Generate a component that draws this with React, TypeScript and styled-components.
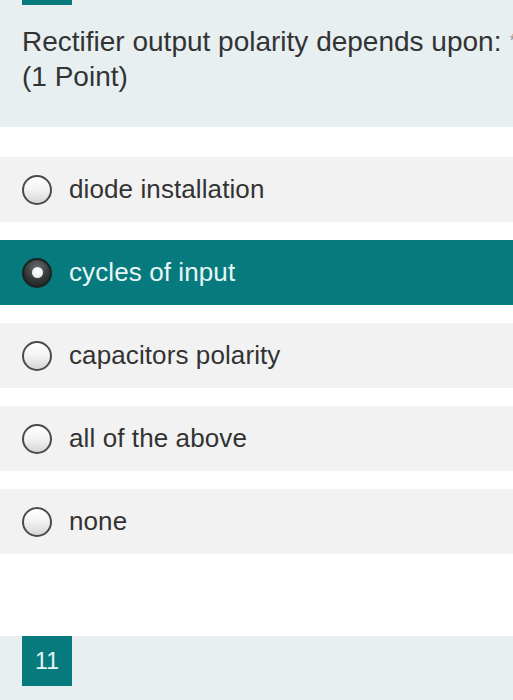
import styled, { createGlobalStyle } from "styled-components";

const GlobalStyle = createGlobalStyle`
  html, body {
    margin: 0;
    padding: 0;
    background: #ffffff;
    font-family: "Liberation Sans", Arial, sans-serif;
  }
`;

const Page = styled.div`
  width: 513px;
  height: 700px;
  display: flex;
  flex-direction: column;
  overflow: hidden;
`;

const Header = styled.div`
  background: #e7eff1;
  padding: 0 0 32px 22px;
  height: 127px;
  box-sizing: border-box;
  overflow: hidden;
`;

const TopMark = styled.div`
  width: 50px;
  height: 5px;
  background: #077a7d;
  margin-bottom: 19px;
`;

const Question = styled.div`
  font-size: 28px;
  line-height: 35px;
  color: #333333;
  white-space: nowrap;
`;

const Star = styled.span`
  color: #999999;
  font-size: 18px;
  vertical-align: top;
  margin-left: 8px;
`;

const Options = styled.div`
  display: flex;
  flex-direction: column;
  gap: 18px;
  margin-top: 30px;
`;

const Option = styled.div<{ $selected?: boolean }>`
  height: 65px;
  display: flex;
  align-items: center;
  gap: 17px;
  padding-left: 22px;
  background: ${(p) => (p.$selected ? "#077a7d" : "#f2f2f2")};
  color: ${(p) => (p.$selected ? "#e8f6f6" : "#333333")};
  font-size: 26px;
  letter-spacing: 0.1px;
`;

const Radio = styled.span<{ $checked?: boolean }>`
  width: 30px;
  height: 30px;
  box-sizing: border-box;
  border-radius: 50%;
  display: flex;
  align-items: center;
  justify-content: center;
  border: 2px solid ${(p) => (p.$checked ? "#1c2222" : "#4a4a4a")};
  background: ${(p) =>
    p.$checked
      ? "radial-gradient(circle at 50% 30%, #6a6e70 0%, #2e3334 60%, #1d2122 100%)"
      : "linear-gradient(180deg, #ffffff 0%, #f4f4f4 45%, #d6d6d6 100%)"};
  flex-shrink: 0;
`;

const Dot = styled.span`
  width: 11px;
  height: 11px;
  border-radius: 50%;
  background: radial-gradient(circle at 50% 40%, #ffffff 0%, #f2f2f2 60%, #c9cccc 100%);
`;

const Footer = styled.div`
  margin-top: auto;
  height: 64px;
  background: #e7eff1;
  padding-left: 22px;
`;

const Badge = styled.div`
  width: 50px;
  height: 50px;
  background: #077a7d;
  color: #e8f6f6;
  font-size: 23px;
  display: flex;
  align-items: center;
  justify-content: center;
`;

const answers = [
  "diode installation",
  "cycles of input",
  "capacitors polarity",
  "all of the above",
  "none",
];

export default function App() {
  const selected = 1;
  return (
    <Page>
      <GlobalStyle />
      <Header>
        <TopMark />
        <Question>
          Rectifier output polarity depends upon:<Star>*</Star>
        </Question>
        <Question>(1 Point)</Question>
      </Header>
      <Options>
        {answers.map((a, i) => (
          <Option key={a} $selected={i === selected}>
            <Radio $checked={i === selected}>{i === selected && <Dot />}</Radio>
            {a}
          </Option>
        ))}
      </Options>
      <Footer>
        <Badge>11</Badge>
      </Footer>
    </Page>
  );
}
